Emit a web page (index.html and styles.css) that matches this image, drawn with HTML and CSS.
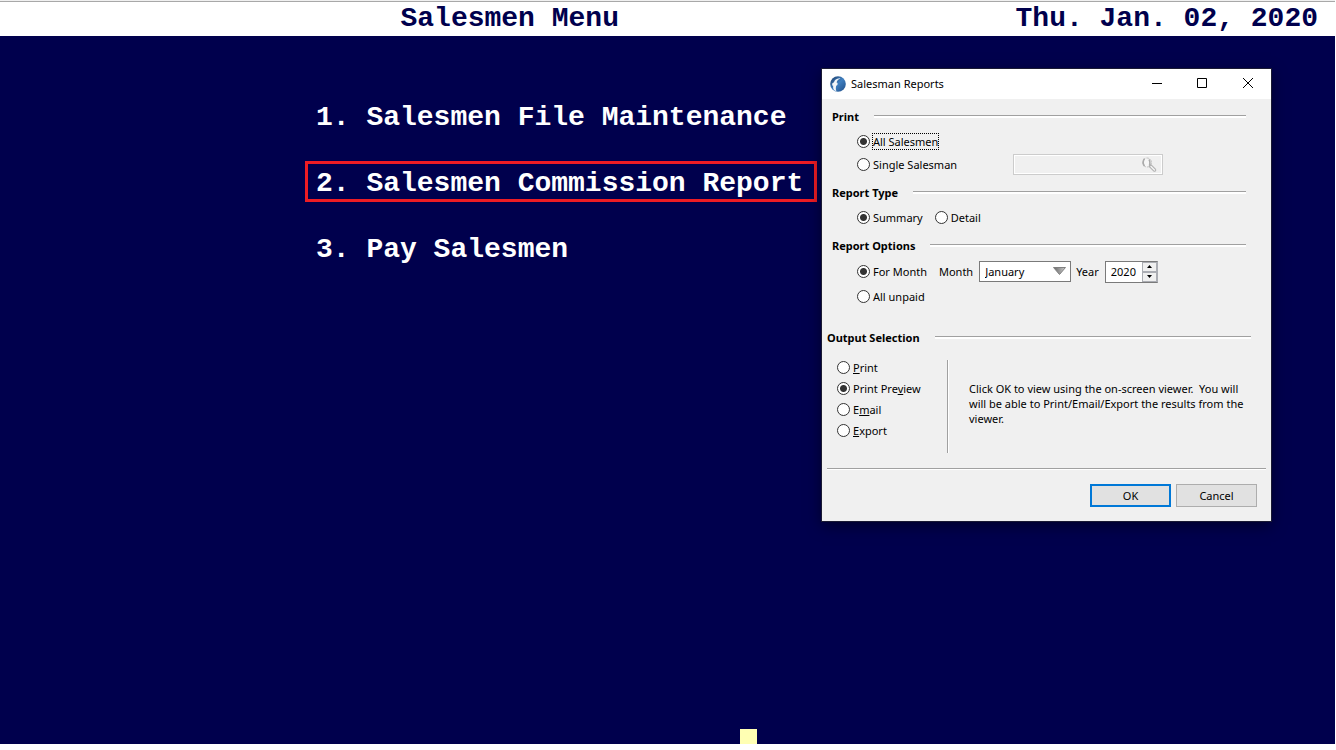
FILE: index.html
```html
<!DOCTYPE html>
<html lang="en">
<head>
  <meta charset="UTF-8" />
  <meta name="viewport" content="width=device-width, initial-scale=1.0" />
  <title>Salesmen Menu</title>
  <link rel="stylesheet" href="styles.css">
</head>
<body>

<header class="topbar">
  <h1 class="topbar-title">Salesmen Menu</h1>
  <div class="topbar-date">Thu. Jan. 02, 2020</div>
</header>

<main class="terminal">
  <nav class="menu">
    <a class="menu-item" href="#maintenance">1. Salesmen File Maintenance</a>
    <a class="menu-item selected" href="#report">2. Salesmen Commission Report</a>
    <a class="menu-item" href="#pay">3. Pay Salesmen</a>
  </nav>
  <div class="cursor"></div>
</main>

<form class="dialog" role="dialog" aria-labelledby="dialog-title">
  <div class="titlebar">
    <svg class="app-icon" viewBox="0 0 16 16" width="16" height="16">
      <defs>
        <linearGradient id="ball" x1="0" y1="0" x2="1" y2="1">
          <stop offset="0" stop-color="#1d3c66" />
          <stop offset="0.5" stop-color="#3f7fc0" />
          <stop offset="1" stop-color="#1f4c86" />
        </linearGradient>
      </defs>
      <circle cx="8" cy="8" r="7.8" fill="url(#ball)" />
      <path d="M9.5 2.2C6.5 2.4 4.4 4 4 6.2L2.2 7.4L2.2 9.6L3.2 9.8C3 11.6 3.2 13 4.2 14.2L6.4 15.2C5.6 13.2 5.8 11.6 6.2 9.8L7.4 9L7.6 7L6.6 6.6C6.8 4.8 8 3.2 10.5 2.4Z" fill="#f2f5f8" />
    </svg>
    <h2 class="dialog-title" id="dialog-title">Salesman Reports</h2>
    <button type="button" class="window-button" aria-label="Minimize">
      <svg viewBox="0 0 11 11" width="11" height="11"><path d="M1 5.5H11" stroke="#000" /></svg>
    </button>
    <button type="button" class="window-button" aria-label="Maximize">
      <svg viewBox="0 0 11 11" width="11" height="11"><path d="M.5 .5H9.5V9.5H.5Z" fill="none" stroke="#000" /></svg>
    </button>
    <button type="button" class="window-button" aria-label="Close">
      <svg viewBox="0 0 11 11" width="11" height="11"><path d="M0 0L10 10M10 0L0 10" stroke="#000" /></svg>
    </button>
  </div>

  <div class="options">
    <section class="group">
      <h3 class="group-title">Print</h3>
      <div class="row">
        <label class="choice"><input type="radio" name="who" checked /><span class="focused">All Salesmen</span></label>
      </div>
      <div class="row spread">
        <label class="choice"><input type="radio" name="who" /><span>Single Salesman</span></label>
        <div class="lookup">
          <input type="text" class="lookup-input" aria-label="Salesman" disabled />
          <svg class="lookup-icon" viewBox="0 0 16 16" width="16" height="16">
            <circle cx="6" cy="5.5" r="4.5" fill="#f6f6f6" stroke="#c4c4c4" stroke-dasharray="3 1" />
            <path d="M3.5 1.8Q.8 5.5 3.5 9M8 2.5Q9.5 5 8.5 8" fill="none" stroke="#aaa" stroke-width="1.5" />
            <path d="M9.5 9L13.5 13" stroke="#b0b0b0" stroke-width="3.5" stroke-linecap="round" />
            <path d="M10 9.5L13.5 13" stroke="#f4f4f4" stroke-width="1.5" stroke-linecap="round" />
          </svg>
        </div>
      </div>
    </section>

    <section class="group">
      <h3 class="group-title">Report Type</h3>
      <div class="row">
        <label class="choice"><input type="radio" name="type" checked /><span>Summary</span></label>
        <label class="choice"><input type="radio" name="type" /><span>Detail</span></label>
      </div>
    </section>

    <section class="group">
      <h3 class="group-title">Report Options</h3>
      <div class="row tall">
        <label class="choice"><input type="radio" name="period" checked /><span>For Month</span></label>
        <div class="field">
          <label for="month">Month</label>
          <div class="dropdown">
            <select id="month">
              <option>January</option>
              <option>February</option>
              <option>March</option>
            </select>
            <svg class="dropdown-arrow" viewBox="0 0 13 8" width="13" height="8">
              <defs>
                <linearGradient id="arrow">
                  <stop offset="0" stop-color="#666" />
                  <stop offset="1" stop-color="#ccc" />
                </linearGradient>
              </defs>
              <path d="M.5 .5H12.5L6.5 7.5Z" fill="url(#arrow)" stroke="#808080" />
            </svg>
          </div>
        </div>
        <div class="field year">
          <label for="year">Year</label>
          <div class="spinner">
            <input type="text" id="year" value="2020" />
            <div class="spinner-buttons">
              <button type="button" aria-label="Next year"><svg viewBox="0 0 5 3" width="5" height="3"><path d="M0 3L2.5 0L5 3Z" /></svg></button>
              <button type="button" aria-label="Previous year"><svg viewBox="0 0 5 3" width="5" height="3"><path d="M0 0L2.5 3L5 0Z" /></svg></button>
            </div>
          </div>
        </div>
      </div>
      <div class="row tall">
        <label class="choice"><input type="radio" name="period" /><span>All unpaid</span></label>
      </div>
    </section>
  </div>

  <section class="output">
    <h3 class="group-title">Output Selection</h3>
    <div class="output-body">
      <div class="output-list">
        <label class="choice"><input type="radio" name="output" /><span><u>P</u>rint</span></label>
        <label class="choice"><input type="radio" name="output" checked /><span>Print Pre<u>v</u>iew</span></label>
        <label class="choice"><input type="radio" name="output" /><span>E<u>m</u>ail</span></label>
        <label class="choice"><input type="radio" name="output" /><span><u>E</u>xport</span></label>
      </div>
      <p class="hint">Click OK to view using the on-screen viewer.&nbsp; You will will be able to Print/Email/Export the results from the viewer.</p>
    </div>
  </section>

  <div class="actions">
    <button type="submit" class="button primary">OK</button>
    <button type="button" class="button">Cancel</button>
  </div>
</form>

</body>
</html>
```
FILE: styles.css
```css
* {
  box-sizing: border-box;
}

body {
  margin: 0;
  padding: 0 1px 6px 0;
  min-height: 100vh;
  display: flex;
  flex-direction: column;
  background: #fff;
  font-family: "Liberation Mono", "Courier New", monospace;
  font-size: 28px;
  font-weight: bold;
}

h1, h2, h3, p {
  margin: 0;
  font: inherit;
}

svg {
  display: block;
}

.topbar {
  display: flex;
  justify-content: space-between;
  height: 36px;
  padding: 0 17px 0 30%;
  border-top: 1px solid #f0f0f0;
  color: #00004d;
  line-height: 36px;
  box-shadow: inset 0 1px #a8a8a8;
}

.terminal {
  flex: 1;
  display: flex;
  flex-direction: column;
  background: #00004d;
}

.menu {
  display: flex;
  flex-direction: column;
  gap: 25px;
  width: 512px;
  margin: 59px 0 0 305px;
}

.menu-item {
  height: 41px;
  padding: 2px 0 0 8px;
  border: 3px solid transparent;
  color: #fff;
  line-height: 36px;
  white-space: nowrap;
  text-decoration: none;
}

.menu-item.selected {
  border-color: #ed1c24;
}

.cursor {
  width: 17px;
  height: 15px;
  margin: auto 0 0 740px;
  background: #ffffb3;
}

/* Report window, floats over the menu */
.dialog {
  position: absolute;
  top: 69px;
  left: 822px;
  width: 449px;
  background: #f0f0f0;
  color: #000;
  font-family: "Noto Sans", "Segoe UI", sans-serif;
  font-size: 11px;
  font-weight: normal;
  box-shadow: 0 0 0 1px #1a1a33, 0 4px 14px rgba(0, 0, 0, 0.5);
}

.dialog input,
.dialog select,
.dialog button {
  margin: 0;
  font: inherit;
  color: inherit;
}

.titlebar {
  display: flex;
  align-items: center;
  height: 30px;
  padding: 0 0 1px 8px;
  background: #fff;
}

.dialog-title {
  flex: 1;
  margin-left: 5px;
}

.window-button {
  display: flex;
  align-items: center;
  justify-content: center;
  width: 46px;
  height: 28px;
  padding: 0;
  border: 0;
  background: none;
}

.options {
  display: flex;
  flex-direction: column;
  gap: 6px;
  padding: 7px 25px 0 10px;
}

.group-title {
  display: flex;
  align-items: center;
  gap: 15px;
  height: 20px;
  margin-bottom: 4px;
  font-weight: bold;
}

.group-title::after {
  content: "";
  flex: 1;
  height: 2px;
  border-top: 1px solid #a0a0a0;
  background: #fff;
}

.row {
  display: flex;
  align-items: center;
  gap: 12px;
  height: 23px;
  padding-left: 25px;
}

.row.tall {
  height: 25px;
}

.row.spread {
  justify-content: space-between;
  padding-right: 83px;
}

.choice {
  display: flex;
  align-items: center;
  gap: 3px;
  white-space: nowrap;
}

.choice input {
  appearance: none;
  width: 13px;
  height: 13px;
  border: 1px solid #333;
  border-radius: 50%;
  background: #fff;
}

.choice input:checked {
  background: radial-gradient(circle, #333 3px, #fff 4px);
}

.focused {
  outline: 1px dotted #000;
}

.lookup {
  position: relative;
}

.lookup-input {
  display: block;
  width: 150px;
  height: 21px;
  border: 1px solid #ccc;
  background: #f0f0f0;
  box-shadow: inset 0 0 0 1px #fff;
}

.lookup-icon {
  position: absolute;
  top: 3px;
  right: 6px;
}

.field {
  display: flex;
  align-items: center;
  gap: 6px;
}

.field.year {
  margin-left: -7px;
}

.dropdown {
  position: relative;
}

.dropdown select {
  appearance: none;
  display: block;
  width: 92px;
  height: 21px;
  padding: 0 5px;
  border: 1px solid #7a7a7a;
  border-radius: 0;
  background: #fff;
}

.dropdown-arrow {
  position: absolute;
  top: 6px;
  right: 5px;
  pointer-events: none;
}

.spinner {
  display: flex;
  width: 53px;
  height: 22px;
  border: 1px solid #7a7a7a;
  border-right-color: #abadb3;
  background: #fff;
}

.spinner input {
  flex: 1;
  min-width: 0;
  padding: 0 0 0 5px;
  border: 0;
  background: none;
}

.spinner-buttons {
  display: flex;
  flex-direction: column;
  width: 15px;
}

.spinner-buttons button {
  flex: 1;
  display: flex;
  align-items: center;
  justify-content: center;
  padding: 0;
  border: 1px solid #abadb3;
  background: #f0f0f0;
}

.output {
  margin: 0 5px;
  padding-top: 18px;
  border-bottom: 1px solid #a0a0a0;
  box-shadow: 0 1px #fff;
}

.output .group-title {
  margin: 0 15px 13px 0;
}

.output-body {
  display: flex;
  align-items: flex-start;
  height: 108px;
}

.output-list {
  width: 121px;
  height: 93px;
  padding-left: 10px;
  border-right: 1px solid #a0a0a0;
  box-shadow: 1px 0 #fff;
}

.output-list .choice {
  height: 21px;
}

.output-list .choice:first-child {
  margin-top: -3px;
}

.hint {
  width: 283px;
  margin: 21px 0 0 21px;
  line-height: 15px;
}

.actions {
  display: flex;
  justify-content: flex-end;
  gap: 5px;
  padding: 15px 14px 14px;
}

.button {
  width: 81px;
  height: 23px;
  padding: 0;
  border: 1px solid #adadad;
  background: #e1e1e1;
}

.button.primary {
  border: 2px solid #0078d7;
}
```
